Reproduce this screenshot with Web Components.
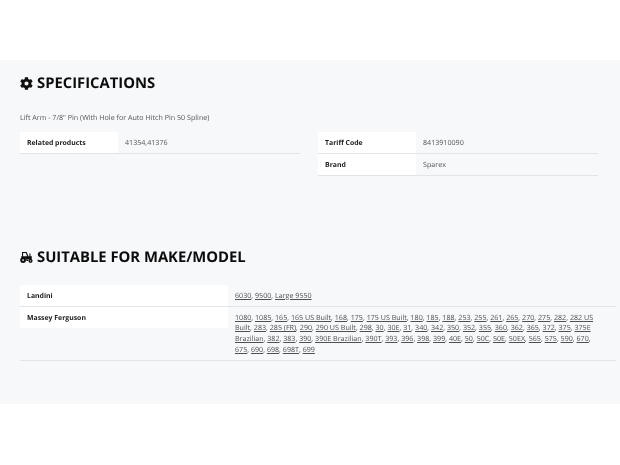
<!DOCTYPE html>
<html><head><meta charset="utf-8"><style>
html,body{margin:0;padding:0;background:#fff}
body{font-family:"Open Sans",sans-serif;width:620px;height:465px;overflow:hidden;text-rendering:geometricPrecision}
</style></head><body>
<spec-page></spec-page>
<script>
class SpecHeading extends HTMLElement{constructor(){super();this.attachShadow({mode:'open'}).innerHTML=`<style>
:host{display:flex;align-items:center;gap:4px;height:20px;font:700 14.800px/20px "Open Sans",sans-serif;color:#0c0c0c;will-change:transform}
::slotted(svg){flex:none}
</style><slot name="icon"></slot><slot></slot>`}}
customElements.define('spec-heading',SpecHeading);
class SpecRow extends HTMLElement{constructor(){super();this.attachShadow({mode:'open'}).innerHTML=`<style>
:host{display:grid;grid-template-columns:var(--label,98px) 1fr;border-bottom:1px solid #e2e4e7;font:400 7.130px/10.700px "Open Sans",sans-serif;color:#555;align-items:start;will-change:transform}
.l{background:#fff;font-weight:700;font-size:6.900px;color:#1c1c1c;padding:7px 8px 3px 7px;height:10.700px}
.v{padding:5.600px var(--vr,4px) 4.400px 7px;min-height:10.700px}
</style><div class="l"><slot name="label"></slot></div><div class="v"><slot></slot></div>`}}
customElements.define('spec-row',SpecRow);
class ModelLinks extends HTMLElement{connectedCallback(){const r=this.shadowRoot||this.attachShadow({mode:'open'});const items=(this.getAttribute('items')||'').split('|');
r.innerHTML=`<style>:host{display:block}a{color:#505050;text-decoration:underline}</style>`+items.map(i=>i.split('~').map(p=>`<a href="#">${p}</a>`).join(' ')).join(', ')}}
customElements.define('model-links',ModelLinks);
class SpecPage extends HTMLElement{constructor(){super();this.attachShadow({mode:'open'}).innerHTML=`<style>
:host{display:block;margin-top:60px;height:344px;background:#f7f8fa;padding:13px 4px 0 20px;box-sizing:border-box}
.desc{margin-top:19.500px;font:400 7.130px/11px "Open Sans",sans-serif;color:#555;will-change:transform}
.cols{display:flex;gap:18px;margin-top:8.500px;padding-right:18px}
.cols>div{flex:1}
.suit{margin-top:71.500px}
.models{margin-top:18.500px;--label:208px;--vr:18px}
</style>
<spec-heading><svg slot="icon" width="13" height="13" viewBox="0 0 512 512"><path fill="#111" d="M487 316l-43-25a194 194 0 000-70l43-25c5-3 7-9 5-14-11-36-30-68-55-95-4-4-10-5-15-2l-43 25a190 190 0 00-60-35V25c0-6-4-11-9-12-37-8-75-8-112 0-5 1-9 6-9 12v50a196 196 0 00-60 35L86 85c-5-3-11-2-15 2-25 27-44 59-55 95-2 5 0 11 5 14l43 25a194 194 0 000 70l-43 25c-5 3-7 9-5 14 11 36 30 68 55 95 4 4 10 5 15 2l43-25a190 190 0 0060 35v50c0 6 4 11 9 12 37 8 75 8 112 0 5-1 9-6 9-12v-50a196 196 0 0060-35l43 25c5 3 11 2 15-2 25-27 44-59 55-95 2-5 0-11-5-14zM256 336a80 80 0 110-160 80 80 0 010 160z"/></svg>SPECIFICATIONS</spec-heading>
<div class="desc">Lift Arm - 7/8" Pin (With Hole for Auto Hitch Pin 50 Spline)</div>
<div class="cols"><div>
<spec-row><span slot="label">Related products</span>41354,41376</spec-row>
</div><div>
<spec-row><span slot="label">Tariff Code</span>8413910090</spec-row>
<spec-row><span slot="label">Brand</span>Sparex</spec-row>
</div></div>
<div class="suit"><spec-heading><svg slot="icon" width="13" height="11" viewBox="0 0 13 11"><path fill="#111" fill-rule="evenodd" d="M2 0h4.700l1.700 4.200h1V1.600h1.100v2.600h1.300v2.300l-.6.700H6.500V8H5.600L5.300 6.200H1.300V4.200H2zM3.100 1v3.200h4L5.900 1z"/><path fill="#111" fill-rule="evenodd" d="M3.100 5.200a2.900 2.900 0 110 5.800 2.900 2.900 0 010-5.800zm0 2a.9.9 0 100 1.800.9.900 0 000-1.800zM10.500 6.700a2.100 2.100 0 110 4.200 2.100 2.100 0 010-4.200zm0 1.500a.6.600 0 100 1.200.6.600 0 000-1.200zM6.400 7.500h2l-.4 1.500H6.300z"/></svg>SUITABLE FOR MAKE/MODEL</spec-heading></div>
<div class="models">
<spec-row><span slot="label">Landini</span><model-links items="6030|9500|Large 9550"></model-links></spec-row>
<spec-row><span slot="label">Massey Ferguson</span><model-links items="1080|1085|165|165 US Built|168|175|175 US Built|180|185|188|253|255|261|265|270|275|282|282 US~Built|283|285 (FR)|290|290 US Built|298|30|30E|31|340|342|350|352|355|360|362|365|372|375|375E~Brazilian|382|383|390|390E Brazilian|390T|393|396|398|399|40E|50|50C|50E|50EX|565|575|590|670|675|690|698|698T|699"></model-links></spec-row>
</div>`}}
customElements.define('spec-page',SpecPage);
</script></body></html>
